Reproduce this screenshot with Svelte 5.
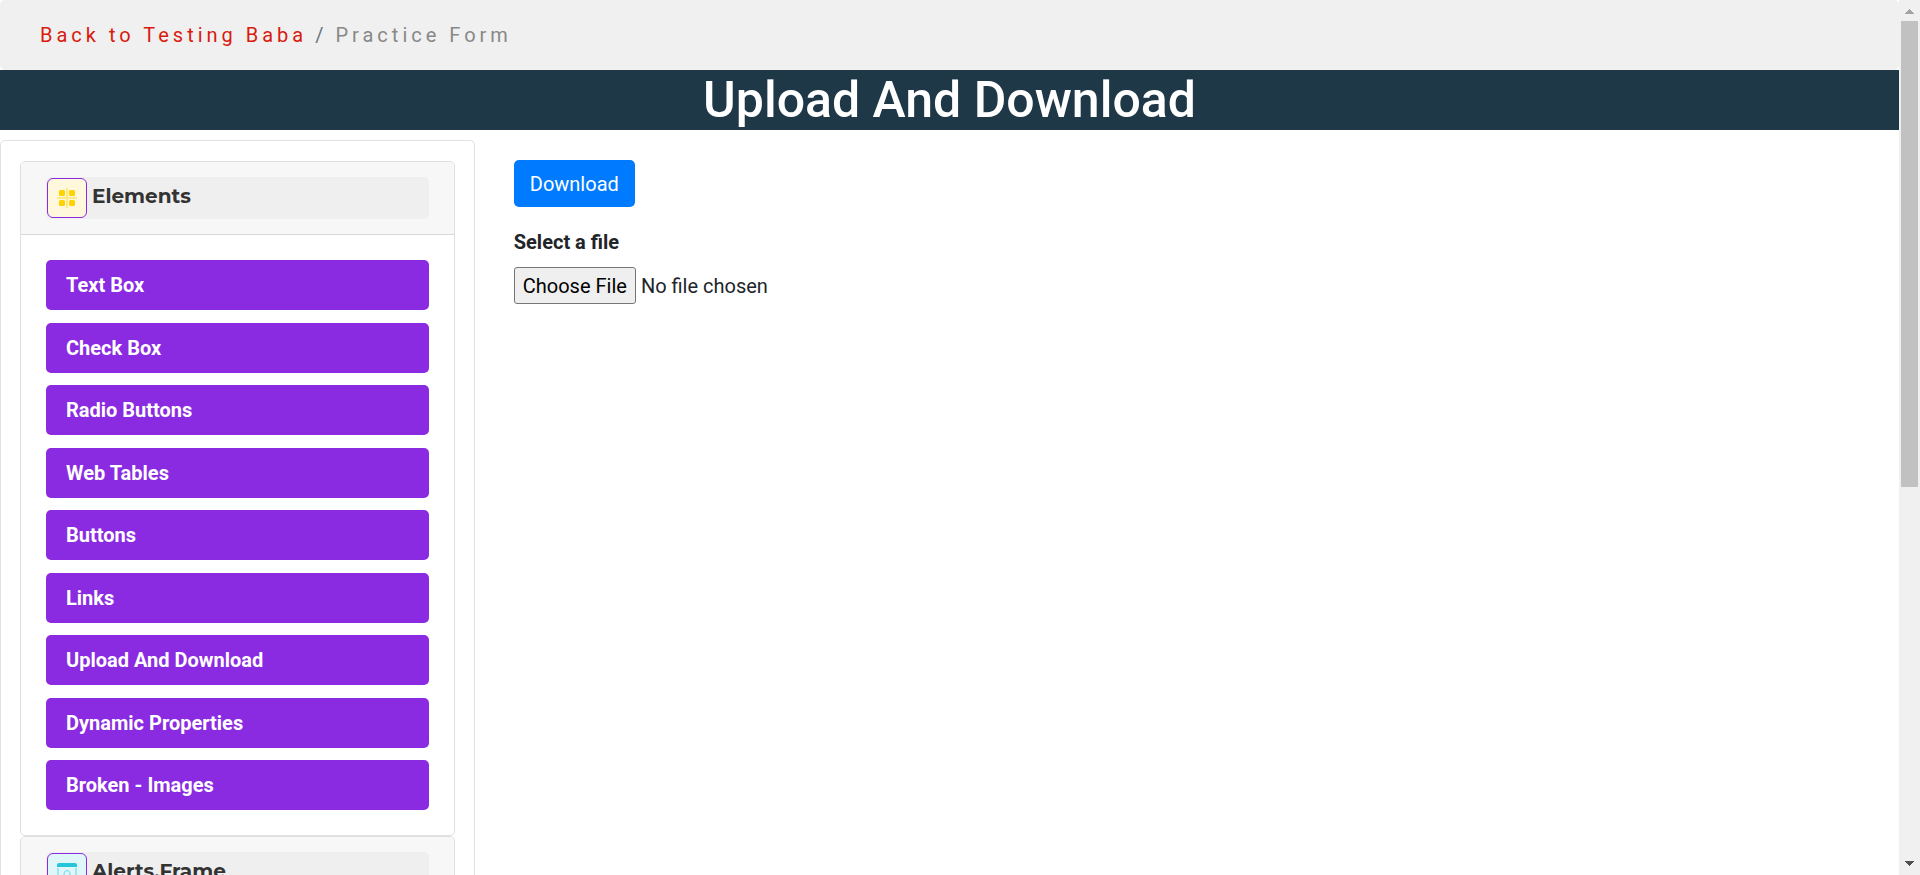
<script>
  const links = [
    'Text Box',
    'Check Box',
    'Radio Buttons',
    'Web Tables',
    'Buttons',
    'Links',
    'Upload And Download',
    'Dynamic Properties',
    'Broken - Images'
  ];
  let open = $state(true);
  let fileName = $state('No file chosen');
  let picker;

  function pick(event) {
    fileName = event.target.files[0]?.name ?? 'No file chosen';
  }
</script>

<div class="window">
  <div class="page">
    <nav class="breadcrumb" aria-label="Breadcrumb">
      <a href="#home">Back to Testing Baba</a>
      <span class="slash">/</span>
      <span class="current">Practice Form</span>
    </nav>
    <h1>Upload And Download</h1>

    <div class="columns">
      <aside class="sidebar">
        <section class="card">
          <header>
            <button class="toggle" aria-expanded={open} onclick={() => (open = !open)}>
              <span class="badge yellow">
                <svg width="20" height="20" viewBox="0 0 20 20" aria-hidden="true">
                  <path d="M10 0v20M0 10h20" stroke="#ffe985" stroke-width="2" />
                  <g fill="#ffd200">
                    <rect x="2" y="2" width="6" height="6" rx="1.5" />
                    <rect x="12" y="2" width="6" height="6" rx="1.5" />
                    <rect x="2" y="12" width="6" height="6" rx="1.5" />
                    <rect x="12" y="12" width="6" height="6" rx="1.5" />
                  </g>
                </svg>
              </span>
              <span class="label">Elements</span>
            </button>
          </header>
          {#if open}
            <ul>
              {#each links as link}
                <li><a href="#{link}">{link}</a></li>
              {/each}
            </ul>
          {/if}
        </section>
        <section class="card">
          <header>
            <button class="toggle" aria-expanded="false">
              <span class="badge cyan">
                <svg width="20" height="20" viewBox="0 0 20 20" aria-hidden="true">
                  <path d="M1 5v12a2 2 0 0 0 2 2h14a2 2 0 0 0 2-2V5" fill="none" stroke="#8be1ee" stroke-width="1.5" />
                  <path d="M2 0h16a2 2 0 0 1 2 2v2H0V2a2 2 0 0 1 2-2z" fill="#26c6da" />
                  <path d="M7 16V12a3 4.500 0 0 1 6 0v4z" fill="none" stroke="#8be1ee" stroke-width="1.5" stroke-linejoin="round" />
                </svg>
              </span>
              <span class="label">Alerts,Frame</span>
            </button>
          </header>
        </section>
      </aside>

      <main>
        <button class="download">Download</button>
        <label for="upload">Select a file</label>
        <div class="file">
          <input id="upload" type="file" bind:this={picker} onchange={pick} />
          <button class="choose" onclick={() => picker.click()}>Choose File</button>
          <span>{fileName}</span>
        </div>
      </main>
    </div>
  </div>

  <div class="scrollbar" aria-hidden="true">
    <svg width="21" height="21" viewBox="0 0 21 21" shape-rendering="crispEdges"><path d="M6 14l4.500-5 4.500 5z" fill="#a3a3a3" /></svg>
    <div class="track"><div class="thumb"></div></div>
    <svg width="21" height="21" viewBox="0 0 21 21" shape-rendering="crispEdges"><path d="M6 7l4.500 5 4.500-5z" fill="#505050" /></svg>
  </div>
</div>

<style>
  :global(body) {
    margin: 0;
  }
  .window {
    display: flex;
    height: 100vh;
    overflow: hidden;
    background: #fff;
    color: #212529;
    font: 20px/30px Roboto, sans-serif;
  }
  .window * {
    box-sizing: border-box;
  }
  .page {
    flex: 1;
    min-width: 0;
    overflow: hidden;
  }
  button {
    font: inherit;
    cursor: pointer;
  }
  a {
    text-decoration: none;
  }
  .breadcrumb {
    display: flex;
    gap: 8px;
    padding: 20px 40px;
    border-radius: 5px;
    background: #f0f0f0;
    letter-spacing: 4px;
  }
  .breadcrumb a {
    color: #d81b0e;
  }
  .slash {
    color: #6c757d;
  }
  .current {
    color: #888;
  }
  h1 {
    margin: 0;
    background: #1e3848;
    color: #fff;
    font-size: 50px;
    font-weight: 500;
    line-height: 60px;
    text-align: center;
  }
  .columns {
    display: flex;
    align-items: flex-start;
    padding-top: 10px;
  }
  .sidebar {
    flex: 0 0 25%;
    padding: 20px 19px;
    border: 1px solid #dee2e6;
    border-radius: 5px;
  }
  .card {
    border: 1px solid #dfdfdf;
    border-radius: 5px;
    overflow: hidden;
  }
  .card header {
    padding: 15px 25px;
    background: #f7f7f7;
  }
  .card header:not(:last-child) {
    border-bottom: 1px solid #d9d9d9;
  }
  .toggle {
    display: flex;
    gap: 5px;
    width: 100%;
    padding: 1px;
    border: 0;
    border-radius: 5px;
    background: #efefef;
    color: #333;
    text-align: left;
  }
  .badge {
    display: grid;
    place-items: center;
    width: 40px;
    height: 40px;
    border: 1px solid #8a2be2;
    border-radius: 6px;
  }
  .yellow {
    background: #fff8dd;
  }
  .cyan {
    background: #e0f7fa;
  }
  .label {
    font-family: Montserrat, Inter, sans-serif;
    font-weight: 700;
    line-height: 36px;
  }
  ul {
    margin: 0;
    padding: 25px;
    list-style: none;
  }
  li:nth-child(odd) {
    margin-bottom: 13px;
  }
  li:nth-child(even) {
    margin-bottom: 12px;
  }
  li:last-child {
    margin-bottom: 0;
  }
  li a {
    display: block;
    padding: 10px 20px;
    border-radius: 5px;
    background: #8a2be2;
    color: #fff;
    font-weight: 700;
  }
  main {
    flex: 1;
    padding: 20px 39px;
  }
  .download {
    display: block;
    padding: 9px 16px 8px;
    border: 0;
    border-radius: 5px;
    background: #007bff;
    color: #fff;
  }
  label {
    display: block;
    margin: 20px 0 10px;
    font-weight: 700;
  }
  .file {
    display: flex;
    align-items: center;
    gap: 5px;
  }
  .file input {
    display: none;
  }
  .choose {
    height: 37px;
    padding: 0 8px;
    border: 1px solid #767676;
    border-radius: 3px;
    background: #efefef;
    color: #000;
  }
  .scrollbar {
    display: flex;
    flex-direction: column;
    flex: 0 0 21px;
    background: #f0f0f0;
  }
  .scrollbar svg {
    display: block;
  }
  .track {
    flex: 1;
    padding: 0 2px;
  }
  .thumb {
    height: 56%;
    background: #c1c1c1;
  }
</style>
